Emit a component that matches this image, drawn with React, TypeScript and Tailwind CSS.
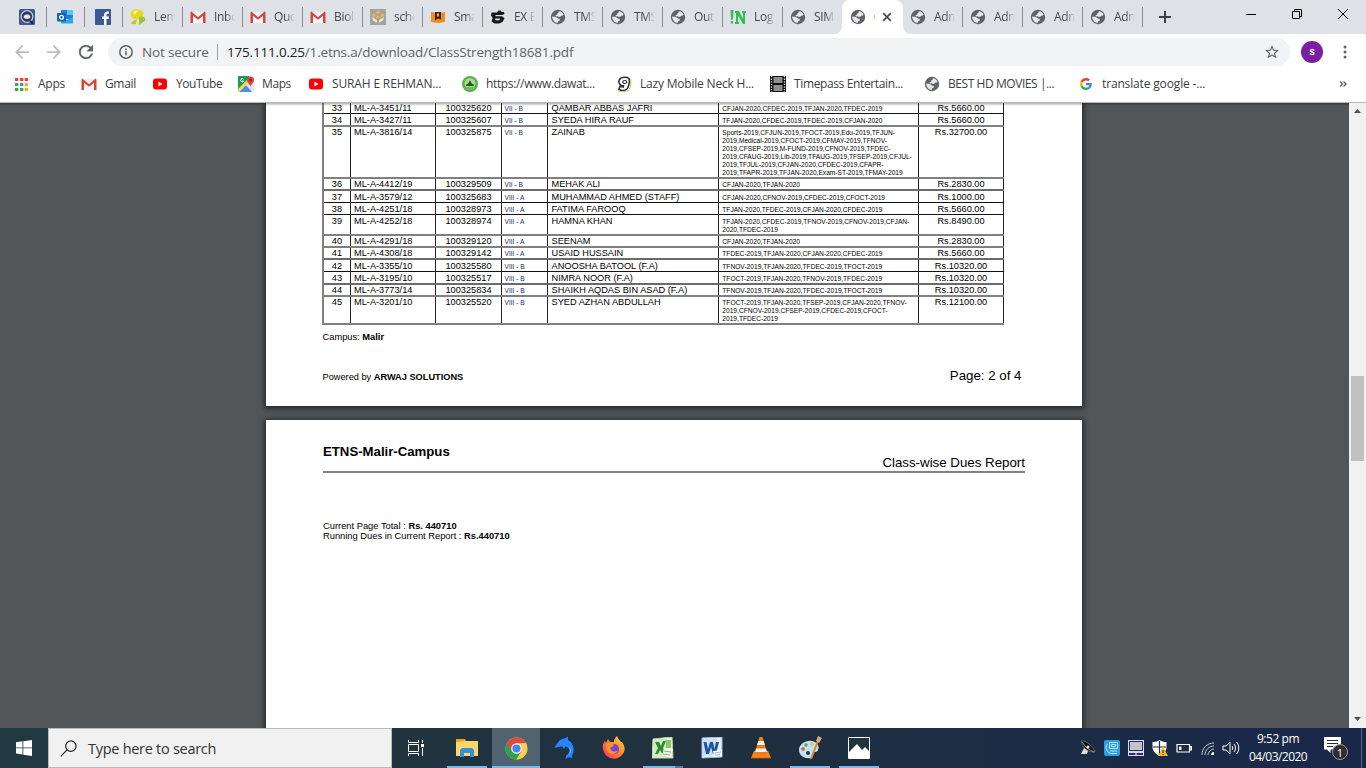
import React from "react";

type IconProps = { className?: string };

const Globe = ({ className = "size-4" }: IconProps) => (
  <svg viewBox="0 0 16 16" className={className}>
    <circle cx="8" cy="8" r="7.2" fill="#5f6368" />
    <path d="M8.800 2.300c2.200.1 3.900 1.500 4.700 3.300-.4 1.100-1.300 1.200-2 1-.5 1.200-1.500 1.500-2.600 1.400L7.600 7.300 6 7.400 5.400 6.200 7.400 5.600V4.300L8.800 3.600z" fill="#e6e8eb" />
    <path d="M2.200 7.600l3.800.5 1.800 1.300 1.900.6.300 1.300-1.800 1-.5 1.700C4.500 13.600 2.200 11.200 2.200 7.600z" fill="#e6e8eb" />
  </svg>
);

const GmailIcon = () => (
  <svg viewBox="0 0 16 16" className="size-4">
    <path d="M1 3h14v11H1z" fill="#eceff1" />
    <path d="M3 6l5 4 5-4v8H3z" fill="#f8f8f8" />
    <path d="M1.300 2.600L8 8.200l6.700-5.600.8.900V14H13V6.800L8 10.800 3 6.800V14H.5V3.500z" fill="#d8433a" />
  </svg>
);

const YouTubeIcon = () => (
  <svg viewBox="0 0 16 16" className="size-4">
    <rect x="1" y="2.500" width="14" height="11" rx="3" fill="#f00" />
    <path d="M6.500 5.600v4.800L10.500 8z" fill="#fff" />
  </svg>
);

const LegIcon = () => (
  <svg viewBox="0 0 16 16" className="size-4">
    <rect width="16" height="16" rx="1.500" fill="#44578a" />
    <circle cx="8" cy="7.500" r="5.800" fill="#2d3868" stroke="#c9cbd6" strokeWidth="1.300" />
    <path d="M4.500 8c0-3.500 7-3.500 7 0-1 2.500-6 2.500-7 0" fill="#efe6da" />
    <path d="M6 6c1-1.500 3-1.500 4 0z" fill="#8f96b5" />
    <path d="M11 12l3 2.500" stroke="#1c2340" strokeWidth="2" />
  </svg>
);

const OutlookIcon = () => (
  <svg viewBox="0 0 16 16" className="size-4">
    <rect x="4" y="1" width="12" height="9" rx="1" fill="#1f7fd0" />
    <rect x="10" y="1" width="6" height="5" fill="#50c8f5" />
    <path d="M4 8l6 3 6-3v6.500H4z" fill="#2ba6e8" />
    <rect x="0" y="4" width="9" height="8.500" rx="1" fill="#0f64b8" />
    <circle cx="4.500" cy="8.200" r="1.900" fill="none" stroke="#fff" strokeWidth="1.300" />
  </svg>
);

const FacebookIcon = () => (
  <svg viewBox="0 0 16 16" className="size-4">
    <rect width="16" height="16" rx="1" fill="#3b5998" />
    <path d="M9 16V10H7V7.500h2V6c0-2.200 1.300-3.500 3.300-3.500H14v2.300h-1.300c-1 0-1.200.5-1.200 1.300v1.400H14L13.600 10h-2.100v6z" fill="#fff" />
  </svg>
);

const LemonIcon = () => (
  <svg viewBox="0 0 16 16" className="size-4">
    <path d="M3 1c3-1.500 8-1 10 2 1 3-1 6-4 7-4 1-7-.5-8-3S1 2 3 1z" fill="#e8d81c" />
    <path d="M4 2c2-.8 4-.6 5 0-2 .3-3 2-4 4C3.500 5 3 3 4 2z" fill="#fbf59a" />
    <path d="M1 14.500c1-2 3-3.500 6-4l-1 4c-1.500.8-3.500 1-5 0z" fill="#c9c31c" />
    <path d="M9 8c2-1 5-.5 6 1 1 2 0 4-2 4l-4 3z" fill="#93c83c" />
  </svg>
);

const SchoolIcon = () => (
  <svg viewBox="0 0 16 16" className="size-4">
    <rect width="16" height="16" fill="#a4a39e" />
    <path d="M8 1.500l2.500 1.700L8 5 5.500 3.200zM3.500 4l2.500 2-2 2.500L1.500 6.500zM12.500 4l2 2.500L12 8.500 10 6zM8 6.500l2.500 1.500L8 10 5.500 8z" fill="#f0b54a" />
    <path d="M2 8l6 3.500L14 8l-1 3.500-5 3-5-3z" fill="#e9e4d8" />
    <path d="M8 10.500v4" stroke="#6f675a" />
  </svg>
);

const SmartIcon = () => (
  <svg viewBox="0 0 16 16" className="size-4">
    <path d="M1 3l7 1 7-1v10l-7 1-7-1z" fill="#f58a1c" />
    <path d="M5 3h6v7.500L8 9.500l-3 2z" fill="#372819" />
    <path d="M7 4.500h2v3H7z" fill="#f8b048" />
  </svg>
);

const DragonIcon = () => (
  <svg viewBox="0 0 16 16" className="size-4">
    <path d="M1.500 3.500H7L8.500 1.500H11L11.500 3H14l.5 2L12 6H5.500v1.200H12l2.500 2L12.500 13 9 14.500H4.500L1.500 12.500l1-3H5l.5 1.800h4l.5-1.800H3L1 6.500z" fill="#17181a" />
  </svg>
);

const InkIcon = () => (
  <svg viewBox="0 0 16 16" className="size-4">
    <path d="M.5 1h3L3 10.500H1zM.8 12h2.200v2.500H.8z" fill="#35bd55" />
    <path d="M5 2h4l4 8V4h-1V2h4v2h-1v11h-2L8 6.500V13h1v2H5v-2h1V4H5z" fill="#35bd55" />
  </svg>
);

const MapsIcon = () => (
  <svg viewBox="0 0 16 16" className="size-4">
    <rect width="16" height="16" rx="1" fill="#e4e6e8" />
    <path d="M0 1a1 1 0 011-1h10v4L1 15a1 1 0 01-1-1z" fill="#1b9b57" />
    <path d="M1 16l7-7 6 7z" fill="#4b8df8" />
    <path d="M0 13l11-11 2 2L1 16H0z" fill="#fdd54a" />
    <path d="M12.500 11C12 8 9 7 9 4a3.500 3.500 0 017 0c0 3-3 4-3.500 7z" fill="#db4437" />
    <circle cx="12.500" cy="4" r="1.300" fill="#7b231d" />
    <path d="M5.500 3.200A1.600 1.600 0 105.700 5H4" stroke="#fff" fill="none" />
  </svg>
);

const DawatIcon = () => (
  <svg viewBox="0 0 16 16" className="size-4">
    <circle cx="8" cy="8" r="8" fill="#55b04c" />
    <circle cx="8" cy="7.500" r="5.500" fill="#a9d896" />
    <path d="M4 9c.8-.7 1.500-1.500 2.500-1.500 0-1.200.7-2.200 1.500-3 .8.800 1.500 1.800 1.500 3 1 0 1.700.8 2.500 1.500v1H4z" fill="#245b22" />
    <path d="M2 11h12c-2 4-10 4-12 0z" fill="#6fbf60" />
  </svg>
);

const NineIcon = () => (
  <svg viewBox="0 0 16 16" className="size-4">
    <path d="M13 2.500c-2-2-8-1.500-9.500 1-1.200 2-.5 5 2 6l2 .2-.3 1.300-3-.7-1.400 3c2 1.500 6 1.800 8.200-.3 1.700-2 3-8 2-10.500z" fill="#fff" stroke="#333" strokeWidth="1.600" />
    <ellipse cx="8.700" cy="6" rx="2" ry="1.500" fill="#fff" stroke="#333" strokeWidth="1.200" />
    <path d="M2 14.700c3 1.500 9 1.500 11-1 1.800-3 2.600-8 1.500-11" fill="none" stroke="#9bcf4f" strokeWidth=".9" />
  </svg>
);

const FilmIcon = () => (
  <svg viewBox="0 0 16 16" className="size-4">
    <rect width="16" height="16" fill="#111" />
    <path d="M3.500 1h9v6h-9zM3.500 9h9v6h-9z" fill="#909090" />
    <path d="M1.500 0v16M14.500 0v16" stroke="#e5e5e5" strokeWidth="1.300" strokeDasharray="1.300 1.300" />
  </svg>
);

const GoogleIcon = () => (
  <svg viewBox="0 0 48 48" className="size-4 p-[2px]">
    <path fill="#EA4335" d="M24 9.500c3.540 0 6.710 1.220 9.210 3.600l6.850-6.850C35.900 2.380 30.470 0 24 0 14.620 0 6.510 5.380 2.560 13.220l7.980 6.190C12.430 13.720 17.740 9.500 24 9.500z" />
    <path fill="#4285F4" d="M46.980 24.550c0-1.570-.15-3.090-.38-4.550H24v9.020h12.940c-.58 2.960-2.260 5.480-4.780 7.180l7.730 6c4.510-4.180 7.090-10.360 7.090-17.650z" />
    <path fill="#FBBC05" d="M10.530 28.590a14.500 14.500 0 010-9.180l-7.980-6.190a24 24 0 000 21.560z" />
    <path fill="#34A853" d="M24 48c6.480 0 11.930-2.130 15.890-5.810l-7.730-6c-2.150 1.450-4.920 2.300-8.160 2.300-6.260 0-11.570-4.220-13.470-9.910l-7.980 6.190C6.510 42.620 14.620 48 24 48z" />
  </svg>
);

const AppsIcon = () => (
  <svg viewBox="0 0 13 13" className="size-[13px]">
    <path d="M0 0h3.300v3H0zM5 0h3.300v3H5zM9.700 0H13v3H9.700z" fill="#ea4335" />
    <path d="M0 5h3.300v3H0z" fill="#34a853" />
    <path d="M5 5h3.300v3H5z" fill="#4285f4" />
    <path d="M9.700 5H13v3H9.700z" fill="#fbab05" />
    <path d="M0 10h3.300v3H0zM5 10h3.300v3H5z" fill="#34a853" />
    <path d="M9.700 10H13v3H9.700z" fill="#fbab05" />
  </svg>
);

const tabsBefore = [
  { icon: <LemonIcon />, label: "Lem" },
  { icon: <GmailIcon />, label: "Inbo" },
  { icon: <GmailIcon />, label: "Quo" },
  { icon: <GmailIcon />, label: "Biol" },
  { icon: <SchoolIcon />, label: "scho" },
  { icon: <SmartIcon />, label: "Sma" },
  { icon: <DragonIcon />, label: "EX E" },
  { icon: <Globe />, label: "TMS" },
  { icon: <Globe />, label: "TMS" },
  { icon: <Globe />, label: "Out" },
  { icon: <InkIcon />, label: "Log" },
  { icon: <Globe />, label: "SIM" },
];

const Tab = ({ icon, label, last }: { icon: React.ReactNode; label: string; last?: boolean }) => (
  <div className="flex w-[60px] shrink-0 items-center">
    <span className="ml-[7px] flex shrink-0">{icon}</span>
    <span className="ml-2 w-[21px] overflow-hidden whitespace-nowrap text-[12px] leading-4 tracking-[-0.3px] text-[#45484c] [mask-image:linear-gradient(to_right,black_55%,transparent)]">
      {label}
    </span>
    {!last && <span className="ml-auto h-5 w-px bg-[#8a8d91]" />}
  </div>
);

const TabStrip = () => (
  <div className="flex h-[34px] items-stretch bg-[#dee1e6]">
    {[<LegIcon key="a" />, <OutlookIcon key="b" />, <FacebookIcon key="c" />].map((icon, i) => (
      <div key={i} className={`flex items-center justify-end ${i === 0 ? "w-[47px]" : "w-[38px]"}`}>
        {icon}
        <span className="ml-[11px] h-5 w-px bg-[#8a8d91]" />
      </div>
    ))}
    {tabsBefore.map((t, i) => (
      <Tab key={i} icon={t.icon} label={t.label} last={i === 11} />
    ))}
    <div className="relative -ml-[1px] flex w-[61px] items-center rounded-t-lg bg-white">
      <svg viewBox="0 0 8 8" className="absolute -left-2 bottom-0 size-2"><path d="M8 0v8H0a8 8 0 008-8z" fill="#fff" /></svg>
      <svg viewBox="0 0 8 8" className="absolute -right-2 bottom-0 size-2"><path d="M0 0v8h8a8 8 0 01-8-8z" fill="#fff" /></svg>
      <span className="ml-2"><Globe /></span>
      <span className="ml-[8px] h-1 w-px bg-[#f5b95c]" />
      <svg viewBox="0 0 10 10" className="ml-[7px] size-[10px]"><path d="M1.200 1.200l7.600 7.600M8.800 1.200L1.200 8.800" stroke="#45484c" strokeWidth="1.700" /></svg>
    </div>
    {[0, 1, 2, 3].map((i) => (
      <Tab key={i} icon={<Globe />} label="Adm" />
    ))}
    <svg viewBox="0 0 12 12" className="ml-4 size-3 self-center"><path d="M6 0v12M0 6h12" stroke="#3c4043" strokeWidth="2" /></svg>
    <div className="ml-auto flex h-7 items-center text-black">
      <svg viewBox="0 0 10 10" className="mr-9 size-[10px]"><path d="M0 5.500h10" stroke="currentColor" /></svg>
      <svg viewBox="0 0 10 10" className="mr-9 size-[10px]"><path d="M.5 2.500h7v7h-7zM2.500 2.500v-2h7v7h-2" fill="none" stroke="currentColor" /></svg>
      <svg viewBox="0 0 10 10" className="mr-[18px] size-[10px]"><path d="M0 0l10 10M10 0L0 10" stroke="currentColor" /></svg>
    </div>
  </div>
);

const Toolbar = () => (
  <div className="flex h-9 items-center bg-white pr-4">
    <svg viewBox="4 4 16 16" className="ml-[15px] size-[14px] shrink-0"><path d="M20 11H7.830l5.590-5.590L12 4l-8 8 8 8 1.410-1.410L7.830 13H20z" fill="#babcbe" /></svg>
    <svg viewBox="4 4 16 16" className="ml-[18px] size-[14px] shrink-0"><path d="M12 4l-1.410 1.410L16.170 11H4v2h12.170l-5.580 5.590L12 20l8-8z" fill="#babcbe" /></svg>
    <svg viewBox="4 4 16 16" className="ml-[18px] size-[14px] shrink-0"><path d="M17.650 6.350A7.960 7.960 0 0012 4a8 8 0 107.730 10h-2.080A6 6 0 1112 6c1.660 0 3.140.69 4.220 1.780L13 11h7V4z" fill="#5f6368" stroke="#5f6368" strokeWidth=".4" /></svg>
    <div className="ml-[15px] flex h-7 w-[1182px] shrink-0 items-center rounded-full bg-[#f1f3f4] px-[11px]">
      <svg viewBox="0 0 14 14" className="size-[14px]"><circle cx="7" cy="7" r="6.200" fill="none" stroke="#5f6368" strokeWidth="1.500" /><path d="M7 6.200v4M7 3.400v1.500" stroke="#5f6368" strokeWidth="1.500" /></svg>
      <span className="ml-[9px] w-[75px] whitespace-nowrap text-[13.500px] leading-5 tracking-[-0.18px] text-[#5f6368]">Not secure</span>
      <span className="h-4 w-px bg-[#9aa0a6]" />
      <span className="ml-[9px] whitespace-nowrap text-[13.500px] leading-5 tracking-[-0.19px] text-[#5f6368]"><span className="text-[#202124]">175.111.0.25</span>/1.etns.a/download/ClassStrength18681.pdf</span>
      <svg viewBox="2 2 20 20" className="ml-auto size-[14px]"><path d="M22 9.240l-7.190-.62L12 2 9.190 8.630 2 9.240l5.460 4.730L5.820 21 12 17.270 18.180 21l-1.630-7.030zM12 15.400l-3.760 2.270 1-4.280-3.320-2.880 4.380-.38L12 6.100l1.710 4.040 4.380.38-3.320 2.880 1 4.280z" fill="#5f6368" /></svg>
    </div>
    <span className="ml-[11px] flex size-[22px] shrink-0 items-center justify-center rounded-full bg-[#7b1fa2] font-['Roboto',sans-serif] text-[11px] font-medium text-white">s</span>
    <svg viewBox="0 0 4 14" className="ml-auto mr-[3px] h-[14px] w-1"><circle cx="2" cy="2" r="1.500" fill="#5f6368" /><circle cx="2" cy="7" r="1.500" fill="#5f6368" /><circle cx="2" cy="12" r="1.500" fill="#5f6368" /></svg>
  </div>
);

const bookmarks = [
  { icon: <AppsIcon />, label: "Apps", box: "w-[66px]", gap: "ml-[10px]", track: "tracking-[-0.25px]" },
  { icon: <GmailIcon />, label: "Gmail", box: "w-[71px]", gap: "ml-2", track: "tracking-[-0.35px]" },
  { icon: <YouTubeIcon />, label: "YouTube", box: "w-[86px]", gap: "ml-2", track: "tracking-[-0.45px]" },
  { icon: <MapsIcon />, label: "Maps", box: "w-[70px]", gap: "ml-2", track: "tracking-[-0.4px]" },
  { icon: <YouTubeIcon />, label: "SURAH E REHMAN...", box: "w-[154px]", gap: "ml-2", track: "tracking-[-0.15px]" },
  { icon: <DawatIcon />, label: "https://www.dawat...", box: "w-[154px]", gap: "ml-2", track: "tracking-[-0.35px]" },
  { icon: <NineIcon />, label: "Lazy Mobile Neck H...", box: "w-[154px]", gap: "ml-2", track: "tracking-[-0.2px]" },
  { icon: <FilmIcon />, label: "Timepass Entertain...", box: "w-[154px]", gap: "ml-2", track: "tracking-[-0.37px]" },
  { icon: <Globe />, label: "BEST HD MOVIES |...", box: "w-[154px]", gap: "ml-2", track: "tracking-[-0.43px]" },
  { icon: <GoogleIcon />, label: "translate google -...", box: "w-[154px]", gap: "ml-2", track: "tracking-[-0.15px]" },
];

const BookmarksBar = () => (
  <div className="flex h-[33px] items-center border-b border-[#b5b6b8] bg-white pb-1 pl-[15px]">
    {bookmarks.map((b) => (
      <div key={b.label} className={`flex shrink-0 items-center ${b.box}`}>
        {b.icon}
        <span className={`whitespace-nowrap text-[12px] leading-4 text-[#3c4043] ${b.gap} ${b.track}`}>{b.label}</span>
      </div>
    ))}
    <svg viewBox="0 0 8 6" className="ml-auto mr-[19px] h-[6px] w-2"><path d="M1 .5L3.500 3 1 5.500M4.500 .5L7 3 4.500 5.500" fill="none" stroke="#5f6368" strokeWidth="1.400" /></svg>
  </div>
);

const thin = "border-b border-[#111]";
const thick = "border-b-2 border-[#808080]";
const dark = "border-b-2 border-[#6a6a6a]";

const rows = [
  { n: 33, id: "ML-A-3451/11", no: "100325620", cls: "VII - B", name: "QAMBAR ABBAS JAFRI", dues: ["CFJAN-2020,CFDEC-2019,TFJAN-2020,TFDEC-2019"], amt: "5660.00", h: "h-[12px]", line: thin, up: false },
  { n: 34, id: "ML-A-3427/11", no: "100325607", cls: "VII - B", name: "SYEDA HIRA RAUF", dues: ["TFJAN-2020,CFDEC-2019,TFDEC-2019,CFJAN-2020"], amt: "5660.00", h: "h-[13px]", line: thick, up: false },
  { n: 35, id: "ML-A-3816/14", no: "100325875", cls: "VII - B", name: "ZAINAB", dues: ["Sports-2019,CFJUN-2019,TFOCT-2019,Edu-2019,TFJUN-", "2019,Medical-2019,CFOCT-2019,CFMAY-2019,TFNOV-", "2019,CFSEP-2019,M-FUND-2019,CFNOV-2019,TFDEC-", "2019,CFAUG-2019,Lib-2019,TFAUG-2019,TFSEP-2019,CFJUL-", "2019,TFJUL-2019,CFJAN-2020,CFDEC-2019,CFAPR-", "2019,TFAPR-2019,TFJAN-2020,Exam-ST-2019,TFMAY-2019"], amt: "32700.00", h: "h-[52px]", line: thick, up: true },
  { n: 36, id: "ML-A-4412/19", no: "100329509", cls: "VII - B", name: "MEHAK ALI", dues: ["CFJAN-2020,TFJAN-2020"], amt: "2830.00", h: "h-[12px]", line: dark, up: true },
  { n: 37, id: "ML-A-3579/12", no: "100325683", cls: "VIII - A", name: "MUHAMMAD AHMED (STAFF)", dues: ["CFJAN-2020,CFNOV-2019,CFDEC-2019,CFOCT-2019"], amt: "1000.00", h: "h-[12px]", line: thin, up: false },
  { n: 38, id: "ML-A-4251/18", no: "100328973", cls: "VIII - A", name: "FATIMA FAROOQ", dues: ["TFJAN-2020,TFDEC-2019,CFJAN-2020,CFDEC-2019"], amt: "5660.00", h: "h-[12px]", line: thin, up: false },
  { n: 39, id: "ML-A-4252/18", no: "100328974", cls: "VIII - A", name: "HAMNA KHAN", dues: ["TFJAN-2020,CFDEC-2019,TFNOV-2019,CFNOV-2019,CFJAN-", "2020,TFDEC-2019"], amt: "8490.00", h: "h-[21px]", line: thick, up: false },
  { n: 40, id: "ML-A-4291/18", no: "100329120", cls: "VIII - A", name: "SEENAM", dues: ["CFJAN-2020,TFJAN-2020"], amt: "2830.00", h: "h-[12px]", line: thick, up: true },
  { n: 41, id: "ML-A-4308/18", no: "100329142", cls: "VIII - A", name: "USAID HUSSAIN", dues: ["TFDEC-2019,TFJAN-2020,CFJAN-2020,CFDEC-2019"], amt: "5660.00", h: "h-[12px]", line: dark, up: true },
  { n: 42, id: "ML-A-3355/10", no: "100325580", cls: "VIII - B", name: "ANOOSHA BATOOL (F.A)", dues: ["TFNOV-2019,TFJAN-2020,TFDEC-2019,TFOCT-2019"], amt: "10320.00", h: "h-[12px]", line: thin, up: false },
  { n: 43, id: "ML-A-3195/10", no: "100325517", cls: "VIII - B", name: "NIMRA NOOR (F.A)", dues: ["TFOCT-2019,TFJAN-2020,TFNOV-2019,TFDEC-2019"], amt: "10320.00", h: "h-[13px]", line: dark, up: false },
  { n: 44, id: "ML-A-3773/14", no: "100325834", cls: "VIII - B", name: "SHAIKH AQDAS BIN ASAD (F.A)", dues: ["TFNOV-2019,TFJAN-2020,TFDEC-2019,TFOCT-2019"], amt: "10320.00", h: "h-[12px]", line: thick, up: true },
  { n: 45, id: "ML-A-3201/10", no: "100325520", cls: "VIII - B", name: "SYED AZHAN ABDULLAH", dues: ["TFOCT-2019,TFJAN-2020,TFSEP-2019,CFJAN-2020,TFNOV-", "2019,CFNOV-2019,CFSEP-2019,CFDEC-2019,CFOCT-", "2019,TFDEC-2019"], amt: "12100.00", h: "h-[28px]", line: thick, up: true },
];

const DuesTable = () => (
  <div className="-mt-px ml-[56px] w-[682px] border-l-2 border-[#808080] text-[9.230px] leading-[12px] text-black">
    {rows.map((r) => (
      <div key={r.n} className={`grid grid-cols-[27px_85px_66px_46px_171px_200px_85px] ${r.h} ${r.line}`}>
        {[
          <span key="n" className="block text-center">{r.n}</span>,
          <span key="i" className="block pl-[3px]">{r.id}</span>,
          <span key="o" className="block text-center">{r.no}</span>,
          <span key="c" className="block pl-[2.500px] pt-[1px] text-[6.630px] text-[#0d2f66]">{r.cls}</span>,
          <span key="m" className="block pl-[3.500px]">{r.name}</span>,
          <span key="d" className="block pl-[3.300px] pt-[3px] text-[6.630px] leading-[8px]">
            {r.dues.map((d) => (
              <span key={d} className="block">{d}</span>
            ))}
          </span>,
          <span key="a" className="block text-center">Rs.{r.amt}</span>,
        ].map((cell, i) => (
          <div key={i} className="h-full min-h-0 whitespace-nowrap border-r border-[#222]">
            <div className={r.up ? "-mt-px" : ""}>{cell}</div>
          </div>
        ))}
      </div>
    ))}
  </div>
);

const Viewer = () => (
  <div className="flex h-[625px] overflow-hidden bg-[#525659]">
    <div className="relative h-full min-w-0 flex-1 overflow-hidden font-['Liberation_Sans',Arial,sans-serif] text-black">
      <div className="ml-[266px] flex h-[303px] w-[816px] flex-col bg-white shadow-[0_1px_5px_2px_rgba(0,0,0,0.5)]">
        <DuesTable />
        <p className="ml-[56.500px] mt-[6px] text-[9.300px] leading-3">Campus: <b>Malir</b></p>
        <div className="ml-[56.500px] mt-[25px] flex w-[699px] items-start justify-between">
          <p className="mt-[3px] text-[9.230px] leading-3">Powered by <b>ARWAJ SOLUTIONS</b></p>
          <p className="text-[13.300px] leading-4">Page: 2 of 4</p>
        </div>
      </div>
      <div className="relative ml-[266px] mt-[14px] h-[400px] w-[816px] bg-white pl-[57px] shadow-[0_1px_5px_2px_rgba(0,0,0,0.5)]">
        <div className="flex h-[52.500px] w-[702px] items-end justify-between border-b-2 border-[#808080]">
          <h1 className="mb-[11px] text-[13.200px] font-bold leading-4">ETNS-Malir-Campus</h1>
          <span className="text-[13.300px] leading-4">Class-wise Dues Report</span>
        </div>
        <p className="mt-[48px] text-[9.330px] leading-[10px]">Current Page Total : <b>Rs. 440710</b></p>
        <p className="text-[9.330px] leading-[10px]">Running Dues in Current Report : <b>Rs.440710</b></p>
      </div>
      <div className="absolute inset-x-0 top-0 h-[3px] bg-gradient-to-b from-black/30 to-transparent" />
    </div>
    <div className="flex w-[17px] shrink-0 flex-col items-center bg-[#f1f1f1] pb-[7px] pt-[6px]">
      <svg viewBox="0 0 7 4" className="h-1 w-[7px]"><path d="M0 4l3.500-4L7 4z" fill="#505050" /></svg>
      <div className="mt-[263px] h-[85px] w-[13px] bg-[#c1c1c1]" />
      <svg viewBox="0 0 7 4" className="mt-auto h-1 w-[7px]"><path d="M0 0l3.500 4L7 0z" fill="#505050" /></svg>
    </div>
  </div>
);

const ExplorerIcon = () => (
  <svg viewBox="0 0 22 20" className="h-5 w-[22px]">
    <path d="M0 1h9l1 2h12v15H0z" fill="#e8a817" /><path d="M0 4l10-1h12v15H0z" fill="#fbd668" />
    <path d="M4 19v-7l2-2h10l2 2v7h-4v-4H8v4z" fill="#3b8fd4" />
  </svg>
);
const ChromeIcon = () => (
  <svg viewBox="0 0 48 48" className="size-[23px]">
    <circle cx="24" cy="24" r="23" fill="#fcd04a" />
    <path d="M24 24L4 12.500A23 23 0 0024 47l10-17z" fill="#2ba24c" />
    <path d="M4 12.500A23 23 0 0144 13H24L14 30z" fill="#dd4b3e" />
    <path d="M44 13c6 14-2 32-20 34l10-17 1-17z" fill="#fcd04a" />
    <circle cx="24" cy="24" r="11" fill="#f4f4f4" /><circle cx="24" cy="24" r="8.500" fill="#4a87ee" />
  </svg>
);
const DolphinIcon = () => (
  <svg viewBox="0 0 22 24" className="h-6 w-[22px]">
    <path d="M.5 11.500C1.500 9 3 8.500 4 6.500 6 3.500 8 2.500 10.500 2.500L14 .5V4c4 2 6.500 7 5.500 12-.3 1.500-1 2.500-1.800 3.500l.8 2.500-3.500-.7L11.500 23l.7-3.700c1.500-1 2.500-1.500 3-2.800.8-2.500 0-4.500-2-5.500l-1.700-.5-1.500 2.500-1.500-2.500c-3-.2-5 1.200-8 1z" fill="#2684fc" />
    <path d="M15.500 12c1.500 2 1.200 4.500-.5 6.500" fill="none" stroke="#8fc2ff" strokeWidth=".8" />
  </svg>
);
const FirefoxIcon = () => (
  <svg viewBox="0 0 24 24" className="size-6">
    <defs><linearGradient id="fx" x1="1" y1="0" x2="0" y2="1"><stop offset="0" stopColor="#ffe14a" /><stop offset=".45" stopColor="#ff8a22" /><stop offset="1" stopColor="#f4267e" /></linearGradient></defs>
    <path d="M1 13C0 9 2 6 3 5l1 2 2-4 2 3h4c0-3 1-4 3-6 1 3 3 4 4 6l1 0c3 4 4 9 0 13-5 6-17 5-19-6z" fill="url(#fx)" />
    <circle cx="12" cy="13" r="5" fill="#7544dc" /><path d="M4 8c3-2 6-1 8 1l-2 2c-2 0-2 2-1 3 2 2 5 2 7 0-1 4-8 6-11 1-1-2-1-5-1-7z" fill="#ff9422" />
  </svg>
);
const ExcelIcon = () => (
  <svg viewBox="0 0 22 22" className="size-[22px]">
    <path d="M1 2L20 0l1 21H0z" fill="#eaf4e2" stroke="#b6d6a4" /><path d="M1.500 2.500l13-1v18.500h-13z" fill="#d3eac3" />
    <path d="M14 3h5v8h-5z" fill="#8cc76f" />
    <path d="M3 5h4l2 4 2-5h3l-3 7 4 7h-4l-3-5-2 4H3l3-6z" fill="#2f8a35" />
    <path d="M12 11l9 1-2 8-9-2z" fill="#f5f9ef" /><path d="M12 14l7 1M11 17l7 1" stroke="#7db966" />
  </svg>
);
const WordIcon = () => (
  <svg viewBox="0 0 22 22" className="size-[22px]">
    <path d="M1 1L21 0v20L1 21z" fill="#e7effa" stroke="#9fbde4" /><path d="M2 2l14-.5v16L2 19z" fill="#cfe0f5" />
    <path d="M2.500 5h3l1.500 7L9 5h3l1.500 7L15 5h3l-3 12h-3l-2-7-2 7H5z" fill="#1d52a5" /><path d="M12 14l9-1v6l-8 1z" fill="#f5f8fd" /><path d="M14 16l6-1M14 18l5-.5" stroke="#7aa0d6" strokeWidth=".7" />
  </svg>
);
const VlcIcon = () => (
  <svg viewBox="0 0 20 24" className="h-6 w-5">
    <path d="M3 15h14l3 7H0z" fill="#f58a1c" /><path d="M8.500 1h3L16.500 18q-6.500 2.500-13 0z" fill="#f37b12" /><path d="M7.300 5h5.400l1.200 4H6.100zM5 12.500h10l1 3.500H4z" fill="#f4f0ea" /><path d="M0 22h20" stroke="#c45e0a" />
  </svg>
);
const PaintIcon = () => (
  <svg viewBox="0 0 24 24" className="size-6">
    <path d="M1 14c0-6 7-10 13-9 5 1 8 5 6 9-1 3-4 1-5 3s1 4-2 5C7 23 1 20 1 14z" fill="#c4e2ef" />
    <circle cx="5" cy="13" r="1.800" fill="#e0523b" /><circle cx="8" cy="9" r="1.800" fill="#5fae48" /><circle cx="14" cy="8" r="1.800" fill="#f3c02f" /><circle cx="10" cy="17" r="2" fill="#1d3a48" />
    <path d="M13 23L20 5" stroke="#d98435" strokeWidth="2" /><path d="M18 5l2-5 4 2-3 5z" fill="#d7a778" />
  </svg>
);
const PhotosIcon = () => (
  <svg viewBox="0 0 22 22" className="size-[22px]">
    <path d="M.5.500h21v21H.5z" fill="#1f3440" stroke="#fff" /><path d="M1 15l8-8 5 6 3-3 4 4v7H1z" fill="#fff" />
  </svg>
);

const apps = [
  { icon: <ExplorerIcon />, bar: "w-10 bg-[#76b9ed]", active: false },
  { icon: <ChromeIcon />, bar: "w-12 bg-[#76b9ed]", active: true },
  { icon: <DolphinIcon />, bar: "", active: false },
  { icon: <FirefoxIcon />, bar: "", active: false },
  { icon: <ExcelIcon />, bar: "w-10 border-r-8 border-[#4f7ca0] bg-[#76b9ed]", active: false },
  { icon: <WordIcon />, bar: "", active: false },
  { icon: <VlcIcon />, bar: "", active: false },
  { icon: <PaintIcon />, bar: "w-10 bg-[#76b9ed]", active: false },
  { icon: <PhotosIcon />, bar: "w-10 bg-[#76b9ed]", active: false },
];

const Tray = () => (
  <div className="ml-auto flex items-center">
    <svg viewBox="0 0 16 16" className="size-4"><path d="M1 1c5-1 12 5 14 11-6 1-13-4-14-11z" fill="#151515" stroke="#777" strokeWidth=".7" /><path d="M2 2c3 5 7 8 12 10" stroke="#bbb" strokeWidth=".8" fill="none" /><path d="M4 8l4 3-1 3H1z" fill="#ddd" /><circle cx="8" cy="7" r="1.500" fill="#eee" /></svg>
    <svg viewBox="0 0 16 16" className="ml-2 size-4"><rect width="16" height="16" rx="2" fill="#2b9fe2" /><path d="M5.500 2.500h8v6h-8zM7.500 4.500h4v2h-4zM3 4c-2 4 0 9.500 5 9.500h5M6 11h7" fill="none" stroke="#c9ecff" strokeWidth=".9" /></svg>
    <svg viewBox="0 0 16 16" className="ml-2 size-4"><rect width="16" height="16" fill="#dadada" /><path d="M1.500 1.500h13v9h-13z" fill="#c4c4c4" stroke="#202a80" /><path d="M1 13h6.300v2H1zM8.700 13H15v2H8.700z" fill="#202a80" /></svg>
    <svg viewBox="0 0 16 16" className="ml-2 size-4"><path d="M7.500 0c2 1.500 4 2 7 2v5c0 4-3 7-7 9-4-2-7-5-7-9V2c3 0 5-.5 7-2z" fill="#fff" /><path d="M7.500 1v14M1 7h13" stroke="#1d2e48" strokeWidth="1.200" /><path d="M11 7l5 9H6z" fill="#fbb911" /><path d="M11 10v3M11 14v1" stroke="#222" /></svg>
    <svg viewBox="0 0 16 16" className="ml-2 size-4"><path d="M1 4.500h12.500v7.500H1zM14 6.500h1.500v3.500H14z" fill="none" stroke="#fff" strokeWidth="1.200" /><path d="M3 6.500h2.500v3.500H3z" fill="#fff" /></svg>
    <svg viewBox="0 0 16 16" className="ml-2 size-4"><path d="M2 15C2 8 7 3 14 3M5 15c0-5 4-9 9-9M8 15c0-3 3-6 6-6" fill="none" stroke="#bfc7d1" /><path d="M11 15c0-2 1-3 3-3v3z" fill="#fff" /></svg>
    <svg viewBox="0 0 18 16" className="ml-[6px] h-4 w-[18px]"><path d="M1 6h3l4-4v12l-4-4H1zM10 6c1 1 1 3 0 4M12 4c2 2 2 6 0 8M14.500 2c3 3 3 9 0 12" fill="none" stroke="#fff" /></svg>
    <div className="flex w-[76px] flex-col items-center whitespace-nowrap text-[12px] leading-[18px] text-white">
      <span className="tracking-[-0.45px]">9:52 pm</span>
      <span className="tracking-[-0.55px]">04/03/2020</span>
    </div>
    <div className="relative ml-2 size-6">
      <svg viewBox="0 0 17 16" className="absolute left-0 top-[1px] h-4 w-[17px]"><path d="M0 0h17v12.500H6.500V16L3 12.500H0z" fill="#fff" /><path d="M3 3.500h11M3 6.500h11M3 9.500h6" stroke="#1b2b45" strokeWidth="1.200" /></svg>
      <span className="absolute left-2 top-2 flex size-4 items-center justify-center rounded-full border border-[#9a9a9a] bg-[#2c2e31] text-[11px] leading-none text-white">1</span>
    </div>
    <span className="ml-[13px] mr-1 h-10 w-px bg-[#57647a]" />
  </div>
);

const Taskbar = () => (
  <div className="flex h-10 items-center bg-gradient-to-r from-[#203a42] via-[#20303f] to-[#19284a]">
    <div className="flex w-12 justify-center">
      <svg viewBox="0 0 16 16" className="size-4"><path d="M0 2.200L6.500 1.300v6.200H0zM7.300 1.200L16 0v7.500H7.300zM0 8.300h6.500v6.200L0 13.600zM7.300 8.300H16V16l-8.700-1.300z" fill="#fff" /></svg>
    </div>
    <div className="flex h-10 w-[344px] items-center border border-[#b9b9b9] bg-[#f1f1f1]">
      <svg viewBox="0 0 18 18" className="ml-[11px] size-[17px]"><circle cx="11.500" cy="6.500" r="5.500" fill="none" stroke="#222" strokeWidth="1.300" /><path d="M7.500 10.500L.7 17.300" stroke="#222" strokeWidth="1.300" /></svg>
      <span className="ml-[11px] whitespace-nowrap pt-[2px] text-[14.500px] leading-5 tracking-[-0.28px] text-[#333]">Type here to search</span>
    </div>
    <div className="flex w-[51px] pl-4">
      <svg viewBox="0 0 16 16" className="size-4"><path d="M.5 0v2.500h10V0M.5 16v-2.500h10V16M.5 4.500h10v7H.500zM14.500 0v3M14.500 8v8" fill="none" stroke="#fff" /><path d="M13 4h3v3h-3z" fill="#fff" /></svg>
    </div>
    <div className="flex gap-px">
      {apps.map((a, i) => (
        <div key={i} className={`flex h-10 w-12 flex-col items-center ${a.active ? "bg-[#4f6470]" : ""}`}>
          <div className="flex h-[38px] items-center pt-[2px]">{a.icon}</div>
          {a.bar && <div className={`h-[2px] ${a.bar}`} />}
        </div>
      ))}
    </div>
    <Tray />
  </div>
);

export default function App() {
  return (
    <div className="flex h-[768px] w-[1366px] flex-col overflow-hidden bg-white font-['Open_Sans','Noto_Sans',sans-serif]">
      <TabStrip />
      <Toolbar />
      <BookmarksBar />
      <Viewer />
      <Taskbar />
    </div>
  );
}
